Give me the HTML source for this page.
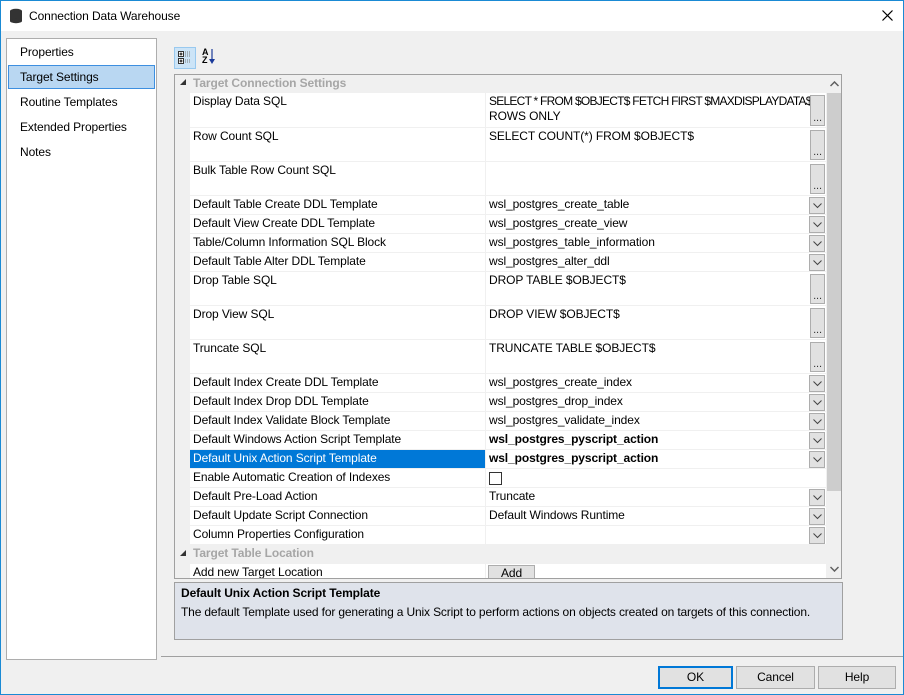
<!DOCTYPE html>
<html><head><meta charset="utf-8"><style>
*{box-sizing:border-box;margin:0;padding:0}
body{width:904px;height:695px;overflow:hidden;font-family:"Liberation Sans",sans-serif;font-size:12px;color:#000;background:#f0f0f0;position:relative;letter-spacing:-0.1px}
.abs{position:absolute}
.win{left:0;top:0;width:904px;height:695px;border:1px solid #1a8ad4}
.title{left:1px;top:1px;width:902px;height:30px;background:#fff}
.list{left:6px;top:38px;width:151px;height:622px;background:#fff;border:1px solid #adadad}
.li{position:absolute;left:13px;font-size:12px}
.grid{left:174px;top:74px;width:668px;height:505px;border:1px solid #a0a0a0;background:#f0f0f0;overflow:hidden}
.row{position:absolute;left:15px;width:636px;background:#fff;border-bottom:1px solid #f0f0f0}
.row .n{position:absolute;left:3px;top:1px;white-space:nowrap}
.row .v{position:absolute;left:295px;top:0;height:100%;border-left:1px solid #f0f0f0;padding:1px 0 0 3px;width:341px;white-space:nowrap;line-height:15px}
.eb{position:absolute;right:1px;width:15px;background:#e1e1e1;border:1px solid #adadad;font-size:11px;text-align:center;line-height:10px;color:#333}
.db{position:absolute;right:1px;top:1px;width:16px;height:17px;background:#e1e1e1;border:1px solid #adadad}
.db svg{position:absolute;left:3px;top:5px}
.cat{position:absolute;left:0;width:651px;color:#a6a6a6;font-weight:bold;background:#f0f0f0}
.sel .n{background:#0078d7;color:#fff;left:0;padding-left:3px;width:295px;top:0;height:18px;padding-top:1px}
.btn{position:absolute;top:666px;height:23px;background:#e1e1e1;border:1px solid #adadad;text-align:center;line-height:21px}
</style></head><body>
<div class="abs win"></div>
<div class="abs title">
<svg class="abs" style="left:8px;top:7px" width="14" height="16" viewBox="0 0 14 16"><ellipse cx="7" cy="3" rx="6" ry="2.2" fill="#333"/><rect x="1" y="3" width="12" height="10" fill="#333"/><ellipse cx="7" cy="13" rx="6" ry="2.2" fill="#333"/></svg>
<div class="abs" style="left:28px;top:8px;font-size:12px">Connection Data Warehouse</div>
<svg class="abs" style="left:881px;top:9px" width="11" height="11"><path d="M0.5 0.5L10.5 10.5M10.5 0.5L0.5 10.5" stroke="#000" stroke-width="1.2"/></svg>
</div>
<div class="abs list">
<div class="li" style="top:6px">Properties</div>
<div style="position:absolute;left:1px;top:26px;width:147px;height:24px;background:#b9d7f2;border:1px solid #3d8fe0"></div>
<div class="li" style="top:31px">Target Settings</div>
<div class="li" style="top:56px">Routine Templates</div>
<div class="li" style="top:81px">Extended Properties</div>
<div class="li" style="top:106px">Notes</div>
</div>
<div class="abs" style="left:174px;top:47px;width:22px;height:22px;background:#cce4f7;border:1px solid #99c9ef"></div>
<svg class="abs" style="left:178px;top:51px" width="14" height="14"><rect x="0.5" y="0.5" width="5" height="5" fill="#fff" stroke="#333"/><path d="M1.5 3H4.5M3 1.5V4.5" stroke="#000"/><rect x="0.5" y="7.5" width="5" height="5" fill="#fff" stroke="#333"/><path d="M1.5 10H4.5M3 8.5V11.5" stroke="#000"/><path d="M7 1h6M7 3h6M7 5h6M7 9h6M7 11h6" stroke="#777" stroke-dasharray="1 1"/></svg>
<div class="abs" style="left:202px;top:48px;font-size:9px;line-height:8px;font-weight:bold">A<br>Z</div>
<svg class="abs" style="left:209px;top:49px" width="6" height="16"><path d="M3 0V12" stroke="#1a3a9a" stroke-width="1.2"/><path d="M0 10L3 15L6 10Z" fill="#1a3a9a"/></svg>
<div class="abs grid">
<div class="cat" style="top:0;height:18px"><span style="position:absolute;left:5px;top:4px;width:0;height:0;border-left:6px solid transparent;border-bottom:6px solid #333"></span><span style="position:absolute;left:18px;top:1px">Target Connection Settings</span></div>
<div class="row" style="top:18px;height:35px"><span class="n">Display Data SQL</span><div class="v"><span style="letter-spacing:-0.75px">SELECT * FROM $OBJECT$ FETCH FIRST $MAXDISPLAYDATA$</span><br>ROWS ONLY<div class="eb" style="top:2px;height:31px;padding-top:17px">...</div></div></div>
<div class="row" style="top:53px;height:34px"><span class="n">Row Count SQL</span><div class="v">SELECT COUNT(*) FROM $OBJECT$<div class="eb" style="top:2px;height:30px;padding-top:16px">...</div></div></div>
<div class="row" style="top:87px;height:34px"><span class="n">Bulk Table Row Count SQL</span><div class="v"><div class="eb" style="top:2px;height:30px;padding-top:16px">...</div></div></div>
<div class="row" style="top:121px;height:19px"><span class="n">Default Table Create DDL Template</span><div class="v">wsl_postgres_create_table<div class="db"><svg width="9" height="6"><path d="M0.5 0.5L4.5 4.5L8.5 0.5" stroke="#444" fill="none"/></svg></div></div></div>
<div class="row" style="top:140px;height:19px"><span class="n">Default View Create DDL Template</span><div class="v">wsl_postgres_create_view<div class="db"><svg width="9" height="6"><path d="M0.5 0.5L4.5 4.5L8.5 0.5" stroke="#444" fill="none"/></svg></div></div></div>
<div class="row" style="top:159px;height:19px"><span class="n">Table/Column Information SQL Block</span><div class="v">wsl_postgres_table_information<div class="db"><svg width="9" height="6"><path d="M0.5 0.5L4.5 4.5L8.5 0.5" stroke="#444" fill="none"/></svg></div></div></div>
<div class="row" style="top:178px;height:19px"><span class="n">Default Table Alter DDL Template</span><div class="v">wsl_postgres_alter_ddl<div class="db"><svg width="9" height="6"><path d="M0.5 0.5L4.5 4.5L8.5 0.5" stroke="#444" fill="none"/></svg></div></div></div>
<div class="row" style="top:197px;height:34px"><span class="n">Drop Table SQL</span><div class="v">DROP TABLE $OBJECT$<div class="eb" style="top:2px;height:30px;padding-top:16px">...</div></div></div>
<div class="row" style="top:231px;height:34px"><span class="n">Drop View SQL</span><div class="v">DROP VIEW $OBJECT$<div class="eb" style="top:2px;height:30px;padding-top:16px">...</div></div></div>
<div class="row" style="top:265px;height:34px"><span class="n">Truncate SQL</span><div class="v">TRUNCATE TABLE $OBJECT$<div class="eb" style="top:2px;height:30px;padding-top:16px">...</div></div></div>
<div class="row" style="top:299px;height:19px"><span class="n">Default Index Create DDL Template</span><div class="v">wsl_postgres_create_index<div class="db"><svg width="9" height="6"><path d="M0.5 0.5L4.5 4.5L8.5 0.5" stroke="#444" fill="none"/></svg></div></div></div>
<div class="row" style="top:318px;height:19px"><span class="n">Default Index Drop DDL Template</span><div class="v">wsl_postgres_drop_index<div class="db"><svg width="9" height="6"><path d="M0.5 0.5L4.5 4.5L8.5 0.5" stroke="#444" fill="none"/></svg></div></div></div>
<div class="row" style="top:337px;height:19px"><span class="n">Default Index Validate Block Template</span><div class="v">wsl_postgres_validate_index<div class="db"><svg width="9" height="6"><path d="M0.5 0.5L4.5 4.5L8.5 0.5" stroke="#444" fill="none"/></svg></div></div></div>
<div class="row" style="top:356px;height:19px"><span class="n">Default Windows Action Script Template</span><div class="v" style="font-weight:bold">wsl_postgres_pyscript_action<div class="db"><svg width="9" height="6"><path d="M0.5 0.5L4.5 4.5L8.5 0.5" stroke="#444" fill="none"/></svg></div></div></div>
<div class="row sel" style="top:375px;height:19px"><span class="n">Default Unix Action Script Template</span><div class="v" style="font-weight:bold">wsl_postgres_pyscript_action<div class="db"><svg width="9" height="6"><path d="M0.5 0.5L4.5 4.5L8.5 0.5" stroke="#444" fill="none"/></svg></div></div></div>
<div class="row" style="top:394px;height:19px"><span class="n">Enable Automatic Creation of Indexes</span><div class="v"><div style="position:absolute;left:3px;top:3px;width:13px;height:13px;border:1px solid #333;background:#fff"></div></div></div>
<div class="row" style="top:413px;height:19px"><span class="n">Default Pre-Load Action</span><div class="v">Truncate<div class="db"><svg width="9" height="6"><path d="M0.5 0.5L4.5 4.5L8.5 0.5" stroke="#444" fill="none"/></svg></div></div></div>
<div class="row" style="top:432px;height:19px"><span class="n">Default Update Script Connection</span><div class="v">Default Windows Runtime<div class="db"><svg width="9" height="6"><path d="M0.5 0.5L4.5 4.5L8.5 0.5" stroke="#444" fill="none"/></svg></div></div></div>
<div class="row" style="top:451px;height:19px"><span class="n">Column Properties Configuration</span><div class="v"><div class="db"><svg width="9" height="6"><path d="M0.5 0.5L4.5 4.5L8.5 0.5" stroke="#444" fill="none"/></svg></div></div></div>
<div class="cat" style="top:470px;height:19px"><span style="position:absolute;left:5px;top:5px;width:0;height:0;border-left:6px solid transparent;border-bottom:6px solid #333"></span><span style="position:absolute;left:18px;top:1px">Target Table Location</span></div>
<div class="row" style="top:489px;height:19px;border:0"><span class="n">Add new Target Location</span><div class="v"><div style="position:absolute;left:2px;top:1px;width:47px;height:17px;background:#e1e1e1;border:1px solid #adadad;text-align:center;line-height:15px">Add</div></div></div>
<div style="position:absolute;left:651px;top:0;width:16px;height:504px;background:#f0f0f0"></div>
<div style="position:absolute;left:652px;top:18px;width:15px;height:398px;background:#cdcdcd"></div>
<svg style="position:absolute;left:655px;top:6px" width="9" height="6"><path d="M0.5 5L4.5 1L8.5 5" stroke="#606060" stroke-width="1.5" fill="none"/></svg>
<svg style="position:absolute;left:655px;top:491px" width="9" height="6"><path d="M0.5 1L4.5 5L8.5 1" stroke="#606060" stroke-width="1.5" fill="none"/></svg>
</div>
<div class="abs" style="left:174px;top:582px;width:669px;height:58px;background:#dfe3eb;border:1px solid #a0a0a0">
<div class="abs" style="left:6px;top:3px;font-weight:bold">Default Unix Action Script Template</div>
<div class="abs" style="left:6px;top:22px;white-space:nowrap;letter-spacing:-0.15px">The default Template used for generating a Unix Script to perform actions on objects created on targets of this connection.</div>
</div>
<div class="abs" style="left:161px;top:656px;width:742px;height:1px;background:#a0a0a0"></div>
<div class="btn" style="left:658px;width:75px;border:2px solid #0078d7;line-height:19px">OK</div>
<div class="btn" style="left:736px;width:79px">Cancel</div>
<div class="btn" style="left:818px;width:78px">Help</div>
</body></html>
